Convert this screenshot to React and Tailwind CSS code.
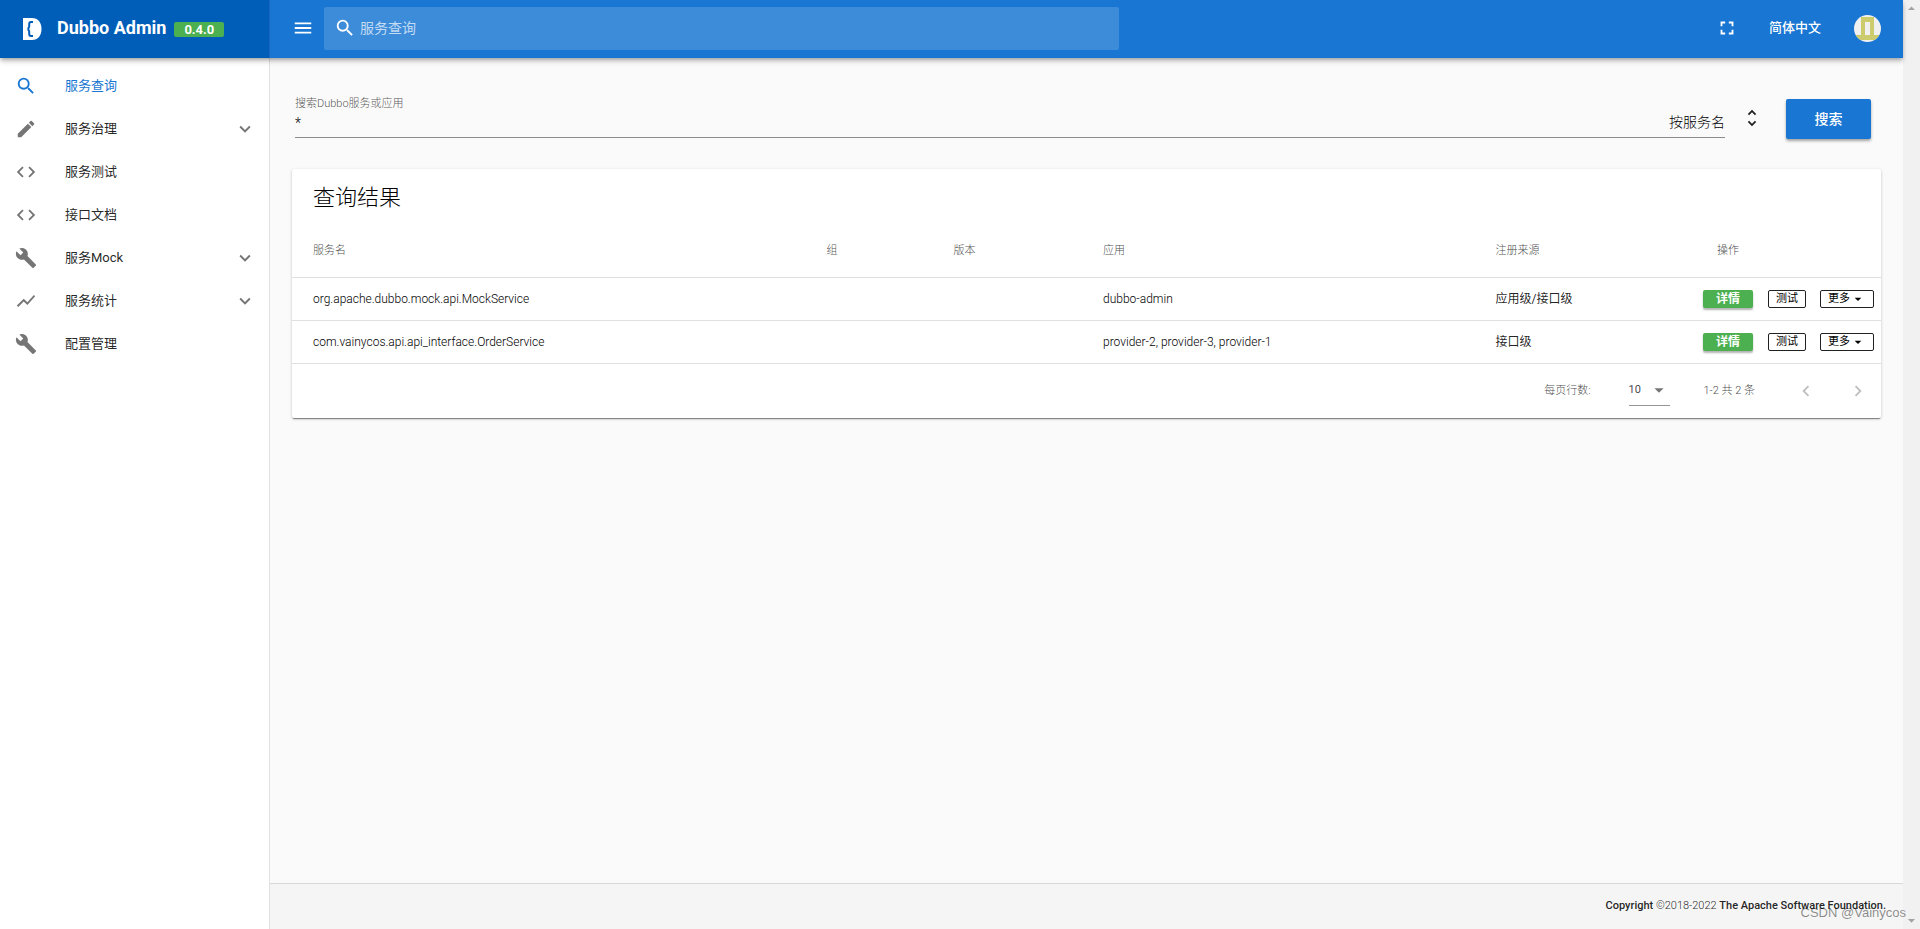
import { useState } from 'react';
import {
  MdArrowDropDown,
  MdArrowDropUp,
  MdBuild,
  MdChevronLeft,
  MdChevronRight,
  MdCode,
  MdEdit,
  MdFullscreen,
  MdKeyboardArrowDown,
  MdMenu,
  MdSearch,
  MdShowChart,
  MdUnfoldMore,
} from 'react-icons/md';

const MENUS = [
  { title: '服务查询', icon: MdSearch, active: true },
  { title: '服务治理', icon: MdEdit, group: true },
  { title: '服务测试', icon: MdCode },
  { title: '接口文档', icon: MdCode },
  { title: '服务Mock', icon: MdBuild, group: true },
  { title: '服务统计', icon: MdShowChart, group: true },
  { title: '配置管理', icon: MdBuild },
];

const SERVICES = [
  { service: 'org.apache.dubbo.mock.api.MockService', group: '', version: '', app: 'dubbo-admin', source: '应用级/接口级' },
  { service: 'com.vainycos.api.api_interface.OrderService', group: '', version: '', app: 'provider-2, provider-3, provider-1', source: '接口级' },
];

function DubboMark() {
  return (
    <svg viewBox="0 0 19 22" className="h-[22px] w-[19px]" fill="none" aria-hidden="true">
      <path d="M0 0h9c6 0 9.500 4.500 9.500 11S15 22 9 22H0z" fill="#fff" />
      <path d="M10 4H8Q6.200 4 6.200 6v2.800L5.400 10v2l.8 1.200V16q0 2 1.800 2h2" stroke="#005eb8" strokeWidth="2" />
    </svg>
  );
}

function Avatar() {
  return (
    <svg viewBox="0 0 27 27" className="size-[27px] rounded-full" aria-hidden="true">
      <rect width="27" height="27" fill="#f0f0f0" />
      <path d="M7 2h13v18h5v5H2v-5h5z" fill="#cccb6e" />
      <path d="M11 7h5v13h-5z" fill="#f0f0f0" />
    </svg>
  );
}

function Toolbar() {
  return (
    <header className="relative z-10 flex h-[58px] shrink-0 bg-[#1976d2] text-white shadow-[0_2px_4px_-1px_rgba(0,0,0,0.3),0_4px_5px_0_rgba(0,0,0,0.14)]">
      <div className="flex w-[270px] shrink-0 items-center border-r border-[#1565c0] bg-[#005eb8] pl-[23px]">
        <DubboMark />
        <h1 className="ml-[15px] pb-0.5 text-[18px] leading-6 font-bold">Dubbo Admin</h1>
        <span className="ml-2 w-[50px] rounded-xs bg-[#4caf50] text-center text-[13px] leading-[15px] font-bold">0.4.0</span>
      </div>
      <div className="flex min-w-0 flex-1 items-center pr-[22px] pb-0.5 pl-[22px]">
        <button type="button" aria-label="menu">
          <MdMenu className="size-[22px]" />
        </button>
        <label className="ml-2.5 flex h-[43px] w-1/2 items-center gap-1 rounded-xs bg-white/16 px-2.5">
          <MdSearch className="size-[22px] shrink-0" />
          <input
            type="text"
            aria-label="服务查询"
            placeholder="服务查询"
            className="min-w-0 flex-1 text-sm leading-5 font-normal outline-none placeholder:text-white/70"
          />
        </label>
        <div className="flex-1" />
        <button type="button" aria-label="fullscreen">
          <MdFullscreen className="size-[22px]" />
        </button>
        <button type="button" className="mr-[33px] ml-[31px] text-[13px] leading-5 font-medium">简体中文</button>
        <button type="button" aria-label="account">
          <Avatar />
        </button>
      </div>
    </header>
  );
}

function Sidebar() {
  return (
    <nav className="w-[270px] shrink-0 border-r border-[#e0e0e0] bg-white pt-[6px]">
      {MENUS.map(({ title, icon: Icon, active, group }) => (
        <a
          key={title}
          href="#"
          className={`flex h-[43px] items-center pr-[13px] pl-[15px] text-[13px] leading-5 font-normal ${active ? 'text-[#1976d2]' : 'text-black/87'}`}
        >
          <Icon className={`size-[22px] ${active ? '' : 'text-[#757575]'}`} />
          <span className="ml-7 flex-1">{title}</span>
          {group && <MdKeyboardArrowDown className="size-[22px] text-[#757575]" />}
        </a>
      ))}
    </nav>
  );
}

function SearchBar() {
  const [filter, setFilter] = useState('*');

  return (
    <form className="flex items-start pr-2.5 pl-[3px] pt-[18px]" onSubmit={(e) => e.preventDefault()}>
      <div className="flex-1 border-b border-[#8c8c8c] pt-0.5">
        <label htmlFor="filter" className="block text-[11px] leading-[18px] text-black/70">搜索Dubbo服务或应用</label>
        <div className="flex h-[24px] items-start">
          <input
            id="filter"
            type="text"
            value={filter}
            onChange={(e) => setFilter(e.target.value)}
            className="min-w-0 flex-1 text-sm leading-5 text-black outline-none"
          />
          <span className="text-sm leading-[18px] text-black">按服务名</span>
        </div>
      </div>
      <button type="button" aria-label="按服务名" className="mt-3.5 mr-[23px] ml-4">
        <MdUnfoldMore className="size-[22px] text-black/87" />
      </button>
      <button
        type="submit"
        className="mt-1.5 h-10 w-[85px] rounded-xs bg-[#1976d2] text-sm font-medium text-white shadow-[0_2px_3px_rgba(0,0,0,0.35)]"
      >
        搜索
      </button>
    </form>
  );
}

function RowActions() {
  return (
    <div className="flex items-center text-[11px] leading-4 font-normal">
      <button type="button" className="h-[18px] w-[50px] rounded-xs bg-[#4caf50] text-xs leading-4 font-bold text-white shadow-[0_2px_2px_rgba(0,0,0,0.3)]">
        详情
      </button>
      <button type="button" className="ml-[15px] h-[18px] w-[38px] rounded-xs border border-[#212121]">测试</button>
      <button type="button" className="ml-3.5 flex h-[18px] w-[54px] items-center justify-center rounded-xs border border-[#212121]">
        更多
        <MdArrowDropDown className="size-4" />
      </button>
    </div>
  );
}

function ResultCard() {
  return (
    <section className="mt-[30px] rounded-xs bg-white shadow-[0_2px_1px_-1px_rgba(0,0,0,0.4),0_1px_3px_0_rgba(0,0,0,0.24)]">
      <h2 className="px-[21px] pt-[13px] pb-[11px] text-[22px] leading-8 font-light text-black">查询结果</h2>
      <table className="w-full table-fixed border-collapse text-left">
        <colgroup>
          <col />
          <col className="w-[8%]" />
          <col className="w-[9.4%]" />
          <col className="w-[24.7%]" />
          <col className="w-[13%]" />
          <col className="w-[200px]" />
        </colgroup>
        <thead>
          <tr className="h-[52px] border-b border-[#e0e0e0] text-[11px] leading-4 text-black/75">
            {['服务名', '组', '版本', '应用', '注册来源'].map((h) => (
              <th key={h} className="px-[21px] font-light">{h}</th>
            ))}
            <th className="pl-9 font-light">操作</th>
          </tr>
        </thead>
        <tbody>
          {SERVICES.map((s) => (
            <tr key={s.service} className="h-[43px] border-b border-[#e0e0e0] text-xs leading-4 text-black">
              <td className="px-[21px]">{s.service}</td>
              <td className="px-[21px]">{s.group}</td>
              <td className="px-[21px]">{s.version}</td>
              <td className="px-[21px]">{s.app}</td>
              <td className="px-[21px] font-normal text-black/87">{s.source}</td>
              <td className="pl-[22px]">
                <RowActions />
              </td>
            </tr>
          ))}
        </tbody>
      </table>
      <div className="flex h-[54px] items-center justify-end pr-3 text-[11px] leading-4 text-black/75">
        <label htmlFor="rows">每页行数:</label>
        <div className="relative mr-[34px] ml-[38px] flex h-[30px] w-[41px] items-center border-b border-[#949494]">
          <select id="rows" defaultValue="10" className="w-full appearance-none font-normal outline-none">
            <option>10</option>
            <option>25</option>
          </select>
          <MdArrowDropDown className="pointer-events-none absolute right-0 size-[22px] text-black/54" />
        </div>
        <span>1-2 共 2 条</span>
        <button type="button" aria-label="上一页" className="ml-10 text-black/26">
          <MdChevronLeft className="size-[22px]" />
        </button>
        <button type="button" aria-label="下一页" className="ml-[30px] text-black/26">
          <MdChevronRight className="size-[22px]" />
        </button>
      </div>
    </section>
  );
}

export default function App() {
  return (
    <div className="flex min-h-screen bg-[#fafafa] font-['Roboto','Noto_Sans_CJK_SC',sans-serif] font-light">
      <div className="flex min-w-0 flex-1 flex-col">
        <Toolbar />
        <div className="flex flex-1">
          <Sidebar />
          <div className="flex min-w-0 flex-1 flex-col">
            <main className="flex-1 px-[22px] pt-[17px]">
              <SearchBar />
              <ResultCard />
            </main>
            <footer className="relative flex h-[46px] items-center justify-end border-t border-[#d8d8d8] bg-[#f5f5f5] pr-[17px] pb-0.5 text-[11px] leading-4 text-black/87">
              <p>
                <span className="font-medium">Copyright</span> ©2018-2022{' '}
                <span className="font-medium">The Apache Software Foundation.</span>
              </p>
              <span className="absolute right-[-3px] bottom-1.5 z-10 font-['Liberation_Sans',sans-serif] text-[13px] leading-5 font-normal text-black/45">
                CSDN @Vainycos
              </span>
            </footer>
          </div>
        </div>
      </div>
      <div className="flex w-[17px] shrink-0 flex-col items-center justify-between bg-[#f1f1f1] text-[#a3a3a3]">
        <MdArrowDropUp className="size-[17px]" />
        <MdArrowDropDown className="size-[17px]" />
      </div>
    </div>
  );
}
